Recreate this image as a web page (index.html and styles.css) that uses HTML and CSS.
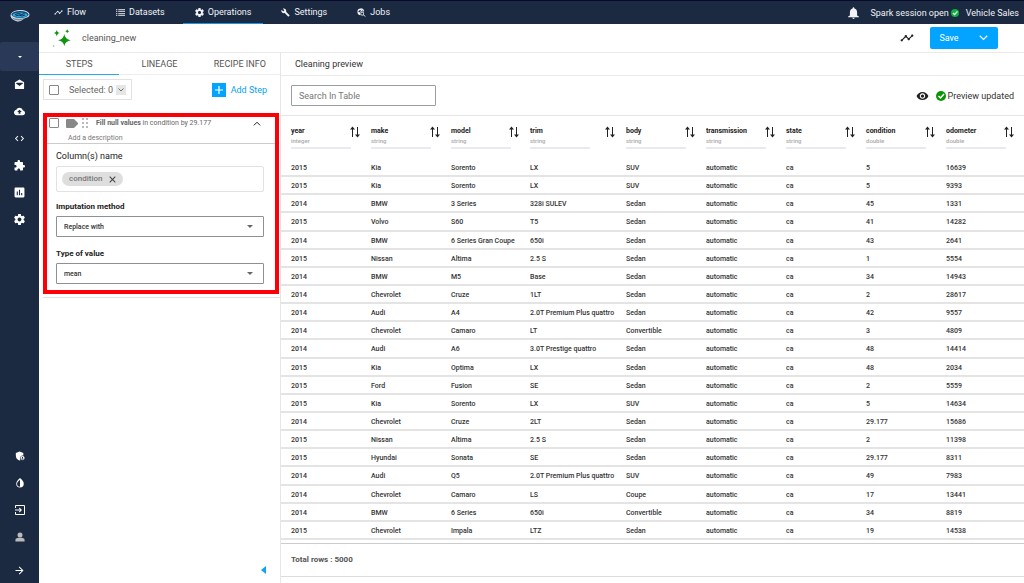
FILE: index.html
```html
<!DOCTYPE html>
<html lang="en">
<head>
<meta charset="utf-8">
<meta name="viewport" content="width=device-width, initial-scale=1">
<title>cleaning_new</title>
<link rel="stylesheet" href="styles.css">
</head>
<body>
<svg class="sprite" aria-hidden="true">
  <symbol id="timeline" viewBox="0 0 24 24"><path d="M23 8c0 1.1-.9 2-2 2-.18 0-.35-.02-.51-.07l-3.56 3.55c.05.16.07.34.07.52 0 1.1-.9 2-2 2s-2-.9-2-2c0-.18.02-.36.07-.52l-2.55-2.55c-.16.05-.34.07-.52.07s-.36-.02-.52-.07l-4.55 4.56c.05.16.07.33.07.51 0 1.1-.9 2-2 2s-2-.9-2-2 .9-2 2-2c.18 0 .35.02.51.07l4.56-4.55C8.02 9.36 8 9.18 8 9c0-1.1.9-2 2-2s2 .9 2 2c0 .18-.02.36-.07.52l2.55 2.55c.16-.05.34-.07.52-.07s.36.02.52.07l3.55-3.56C19.02 8.35 19 8.18 19 8c0-1.1.9-2 2-2s2 .9 2 2z"/></symbol>
  <symbol id="list" viewBox="2 2 20 20"><path d="M2 5h3v2H2zM2 9h3v2H2zM2 13h3v2H2zM2 17h3v2H2zM7 5h15v2H7zM7 9h15v2H7zM7 13h15v2H7zM7 17h15v2H7z"/></symbol>
  <symbol id="gear" viewBox="2 2 20 20"><path d="M19.43 12.98c.04-.32.07-.64.07-.98s-.03-.66-.07-.98l2.11-1.65c.19-.15.24-.42.12-.64l-2-3.46c-.12-.22-.39-.3-.61-.22l-2.49 1c-.52-.4-1.08-.73-1.69-.98l-.38-2.65C14.46 2.18 14.25 2 14 2h-4c-.25 0-.46.18-.49.42l-.38 2.65c-.61.25-1.17.59-1.69.98l-2.49-1c-.23-.09-.49 0-.61.22l-2 3.46c-.13.22-.07.49.12.64l2.11 1.65c-.04.32-.07.65-.07.98s.03.66.07.98l-2.11 1.65c-.19.15-.24.42-.12.64l2 3.46c.12.22.39.3.61.22l2.49-1c.52.4 1.08.73 1.69.98l.38 2.65c.03.24.24.42.49.42h4c.25 0 .46-.18.49-.42l.38-2.65c.61-.25 1.17-.59 1.69-.98l2.49 1c.23.09.49 0 .61-.22l2-3.46c.12-.22.07-.49-.12-.64l-2.11-1.65zM12 15.5c-1.93 0-3.5-1.57-3.5-3.5s1.57-3.5 3.5-3.5 3.5 1.57 3.5 3.5-1.57 3.5-3.5 3.5z"/></symbol>
  <symbol id="wrench" viewBox="0 0 24 24"><path d="M22.7 19l-9.1-9.1c.9-2.3.4-5-1.5-6.9-2-2-5-2.4-7.4-1.3L9 6 6 9 1.6 4.7C.4 7.1.9 10.1 2.9 12.1c1.9 1.9 4.6 2.4 6.9 1.5l9.1 9.1c.4.4 1 .4 1.4 0l2.3-2.3c.5-.4.5-1.1.1-1.4z"/></symbol>
  <symbol id="jobs" viewBox="0 0 24 24"><path fill-rule="evenodd" d="M10 1a9 9 0 0 1 9 8l-3 0a6 6 0 0 0-8 5 6 6 0 0 0 2 5A9 9 0 1 1 10 1zM3 9l3 3 5-5-3-2zM12 4l2 3 2-1z"/><path fill-rule="evenodd" d="M14 10a5 5 0 0 1 4 8l5 4-1 1-5-4a5 5 0 1 1-3-9zm0 2a3 3 0 1 0 0 6 3 3 0 0 0 0-6z"/></symbol>
  <symbol id="bell" viewBox="3 2 18 20"><path d="M12 22c1.1 0 2-.9 2-2h-4c0 1.1.9 2 2 2zm6-6v-5c0-3.07-1.63-5.64-4.5-6.32V4c0-.83-.67-1.5-1.5-1.5s-1.5.67-1.5 1.5v.68C7.64 5.36 6 7.92 6 11v5l-3 2v1h18v-1z"/></symbol>
  <symbol id="check" viewBox="2 2 20 20"><circle cx="12" cy="12" r="10"/><path class="tick" d="M7 12l4 4 7-8"/></symbol>
  <symbol id="chev" viewBox="0 0 12 8"><path class="line" d="M1 1l5 5 5-5"/></symbol>
  <symbol id="eye" viewBox="0 3 24 18"><path d="M12 4.500C7 4.500 2.730 7.610 1 12c1.730 4.390 6 7.500 11 7.500s9.270-3.110 11-7.500c-1.730-4.390-6-7.500-11-7.500zM12 17c-2.760 0-5-2.240-5-5s2.240-5 5-5 5 2.240 5 5-2.240 5-5 5zm0-8c-1.660 0-3 1.340-3 3s1.340 3 3 3 3-1.340 3-3-1.340-3-3-3z"/></symbol>
  <symbol id="mail" viewBox="0 0 24 24"><path d="M12 1l10 6v13a2 2 0 0 1-2 2H4a2 2 0 0 1-2-2V7zM4 9l8 6 8-6-2-1H6z" fill-rule="evenodd"/></symbol>
  <symbol id="cloud" viewBox="0 2 24 20"><path d="M19.350 10.040C18.670 6.590 15.640 4 12 4 9.110 4 6.600 5.640 5.350 8.040 2.340 8.360 0 10.910 0 14c0 3.310 2.690 6 6 6h13c2.760 0 5-2.240 5-5 0-2.640-2.050-4.780-4.650-4.960zM14 13v4h-4v-4H7l5-5 5 5h-3z"/></symbol>
  <symbol id="code" viewBox="0 0 24 24"><path d="M9.400 16.600L4.800 12l4.600-4.600L8 6l-6 6 6 6 1.400-1.400zm5.200 0l4.600-4.600-4.600-4.600L16 6l6 6-6 6-1.400-1.400z"/></symbol>
  <symbol id="puzzle" viewBox="1 1 22 22"><path d="M20.500 11H19V7c0-1.100-.9-2-2-2h-4V3.500C13 2.120 11.880 1 10.500 1S8 2.120 8 3.500V5H4c-1.100 0-1.990.9-1.990 2v3.800H3.500c1.490 0 2.700 1.210 2.700 2.700s-1.210 2.700-2.700 2.700H2V20c0 1.100.9 2 2 2h3.800v-1.500c0-1.490 1.210-2.700 2.700-2.700s2.700 1.210 2.700 2.700V22H17c1.100 0 2-.9 2-2v-4h1.500c1.380 0 2.500-1.120 2.500-2.500S21.880 11 20.500 11z"/></symbol>
  <symbol id="chart" viewBox="2 2 20 20"><path d="M19 3H5c-1.100 0-2 .9-2 2v14c0 1.100.9 2 2 2h14c1.100 0 2-.9 2-2V5c0-1.100-.9-2-2-2zM9 17H7v-7h2v7zm4 0h-2V7h2v10zm4 0h-2v-4h2v4z"/></symbol>
  <symbol id="shield" viewBox="0 0 24 24"><path fill-rule="evenodd" d="M11 1l9 4v6c-5-1-9 3-8 8l1 3-2 1C5 21 2 17 2 11V5zM18 12a5 5 0 1 1 0 10 5 5 0 0 1 0-10zm0 2a1 1 0 0 0 0 3 1 1 0 0 0 0-3zm-3 5c2 2 4 2 6 0-2-2-4-2-6 0z"/></symbol>
  <symbol id="drop" viewBox="0 0 24 24"><path fill-rule="evenodd" d="M12 0c6 5 9 9 9 14a9 9 0 0 1-18 0C3 9 6 5 12 0zm0 4c-5 4-7 7-7 10a7 7 0 0 0 7 7z"/></symbol>
  <symbol id="exit" viewBox="2 2 20 20"><path fill-rule="evenodd" d="M4 2h16a2 2 0 0 1 2 2v16a2 2 0 0 1-2 2H4a2 2 0 0 1-2-2v-4h2v4h16V4H4v4H2V4a2 2 0 0 1 2-2z"/><path d="M11 7l5 5-5 5-1-2 2-2H2v-2h10l-2-2z"/></symbol>
  <symbol id="user" viewBox="0 0 24 24"><circle cx="12" cy="7" r="6"/><path d="M1 23v-4c0-4 5-5 11-5s11 1 11 5v4z"/></symbol>
  <symbol id="arrow" viewBox="3 3 18 18"><path d="M12 4l-1.410 1.410L16.170 11H4v2h12.170l-5.580 5.590L12 20l8-8z"/></symbol>
  <symbol id="sort" viewBox="0 0 20 24"><path d="M5 1l5 6H6v15H4V7H0zM15 23l-5-6h4V2h2v15h4z"/></symbol>
</svg>
<div class="app">
  <aside class="rail">
    <a class="logo" href="#" aria-label="Home"><svg viewBox="0 0 40 26"><path d="M1 13C2 5 12 2 21 2s18 4 18 9-4 6-8 7-8 7-14 7S1 20 1 13z" fill="#cfdbe4"/><ellipse cx="20" cy="11" rx="17" ry="7" fill="#17466b"/><ellipse cx="20" cy="12" rx="15" ry="5" fill="#29a8e8"/><path d="M10 11l7-2 6 2 6-2M11 14l7-2 6 2 6-2" stroke="#0b2f4c" stroke-width="2" fill="none"/><path d="M4 17c6 3 20 4 28 0-4 2-8 6-14 6S6 21 4 17z" fill="#7c8b96"/></svg></a>
    <button class="rail-toggle" aria-label="Project menu"><span class="caret"></span></button>
    <nav class="rail-nav" aria-label="Project">
      <a href="#" aria-label="Inbox"><svg><use href="#mail"/></svg></a>
      <a href="#" aria-label="Upload"><svg><use href="#cloud"/></svg></a>
      <a href="#" aria-label="Code"><svg><use href="#code"/></svg></a>
      <a href="#" aria-label="Plugins"><svg><use href="#puzzle"/></svg></a>
      <a href="#" aria-label="Reports"><svg><use href="#chart"/></svg></a>
      <a href="#" aria-label="Settings"><svg><use href="#gear"/></svg></a>
    </nav>
    <nav class="rail-nav rail-end" aria-label="Account">
      <a href="#" aria-label="Administration"><svg><use href="#shield"/></svg></a>
      <a href="#" aria-label="Theme"><svg><use href="#drop"/></svg></a>
      <a href="#" aria-label="Sign out"><svg><use href="#exit"/></svg></a>
      <a class="muted" href="#" aria-label="Profile"><svg><use href="#user"/></svg></a>
      <a class="expand" href="#" aria-label="Expand"><svg><use href="#arrow"/></svg></a>
    </nav>
  </aside>
  <div class="page">
    <header class="topbar">
      <nav class="topnav" aria-label="Main">
        <a href="#"><svg><use href="#timeline"/></svg>Flow</a>
        <a href="#"><svg><use href="#list"/></svg>Datasets</a>
        <a href="#" class="active"><svg><use href="#gear"/></svg>Operations</a>
        <a href="#"><svg><use href="#wrench"/></svg>Settings</a>
        <a href="#"><svg><use href="#jobs"/></svg>Jobs</a>
      </nav>
      <div class="status">
        <button class="bell" aria-label="Notifications"><svg><use href="#bell"/></svg></button>
        <span>Spark session open</span><svg class="ok"><use href="#check"/></svg><span class="project">Vehicle Sales</span>
      </div>
    </header>
    <div class="titlebar">
      <svg class="sparkles" viewBox="0 0 54 58"><path d="M34 15q2 16 20 19-18 3-20 19-2-16-19-19 17-3 19-19zM11 2q1 9 10 10-9 1-10 11-1-10-10-11 9-1 10-10zM43 1q1 5 6 6-5 1-6 6-1-5-6-6 5-1 6-6zM2 49q0 3 3 3-3 0-3 3 0-3-3-3 3 0 3-3z"/></svg>
      <h1>cleaning_new</h1>
      <button class="trend" aria-label="Activity"><svg><use href="#timeline"/></svg></button>
      <div class="save"><button>Save</button><button aria-label="Save options"><svg><use href="#chev"/></svg></button></div>
    </div>
    <main class="work">
      <section class="steps">
        <nav class="tabs" aria-label="Recipe"><a class="active" href="#">STEPS</a><a href="#">LINEAGE</a><a href="#">RECIPE INFO</a></nav>
        <div class="tools">
          <div class="selected"><input type="checkbox" id="all"><label for="all">Selected: 0</label><button aria-label="Selection actions"><svg><use href="#chev"/></svg></button></div>
          <button class="add"><span class="plus"><svg viewBox="0 0 10 10"><path class="line" d="M5 0v10M0 5h10"/></svg></span>Add Step</button>
        </div>
        <article class="card">
          <div class="highlight">
            <header class="step">
              <div class="step-row">
                <input type="checkbox" aria-label="Select step">
                <svg class="tag" viewBox="0 0 12 9"><path d="M0 1a1 1 0 0 1 1-1h7l4 4v1L8 9H1a1 1 0 0 1-1-1z"/></svg>
                <svg class="grip" viewBox="0 0 6 10"><path d="M0 0h2v2H0zM4 0h2v2H4zM0 4h2v2H0zM4 4h2v2H4zM0 8h2v2H0zM4 8h2v2H4z"/></svg>
                <p><b>Fill null values</b> in condition by 29.177</p>
                <button class="fold" aria-label="Collapse"><svg><use href="#chev"/></svg></button>
              </div>
              <p class="desc">Add a description</p>
            </header>
            <div class="form">
              <h2>Column(s) name</h2>
              <div class="chips"><span class="chip">condition<button aria-label="Remove condition"><svg viewBox="0 0 10 10"><path class="line" d="M1 1l8 8M9 1L1 9"/></svg></button></span></div>
              <label for="method">Imputation method</label>
              <div class="select"><select id="method"><option>Replace with</option></select><span class="caret"></span></div>
              <label for="type">Type of value</label>
              <div class="select"><select id="type"><option>mean</option></select><span class="caret"></span></div>
            </div>
          </div>
        </article>
        <button class="collapse" aria-label="Collapse panel"><svg viewBox="0 0 5 8"><path d="M5 0v8L0 4z"/></svg></button>
      </section>
      <section class="preview">
        <h2 class="preview-title">Cleaning preview</h2>
        <div class="filter">
          <input type="text" placeholder="Search In Table" aria-label="Search In Table">
          <button class="view" aria-label="Show columns"><svg><use href="#eye"/></svg></button>
          <svg class="ok"><use href="#check"/></svg><span>Preview updated</span>
        </div>
        <div class="table-wrap">
        <table>
          <colgroup><col class="c"><col class="c"><col class="c-model"><col class="c-trim"><col class="c"><col class="c"><col class="c"><col class="c"><col></colgroup>
          <thead><tr>
            <th><div class="head"><span>year<small>integer</small></span><button aria-label="Sort year"><svg><use href="#sort"/></svg></button></div></th>
            <th><div class="head"><span>make<small>string</small></span><button aria-label="Sort make"><svg><use href="#sort"/></svg></button></div></th>
            <th><div class="head"><span>model<small>string</small></span><button aria-label="Sort model"><svg><use href="#sort"/></svg></button></div></th>
            <th><div class="head"><span>trim<small>string</small></span><button aria-label="Sort trim"><svg><use href="#sort"/></svg></button></div></th>
            <th><div class="head"><span>body<small>string</small></span><button aria-label="Sort body"><svg><use href="#sort"/></svg></button></div></th>
            <th><div class="head"><span>transmission<small>string</small></span><button aria-label="Sort transmission"><svg><use href="#sort"/></svg></button></div></th>
            <th><div class="head"><span>state<small>string</small></span><button aria-label="Sort state"><svg><use href="#sort"/></svg></button></div></th>
            <th><div class="head"><span>condition<small>double</small></span><button aria-label="Sort condition"><svg><use href="#sort"/></svg></button></div></th>
            <th><div class="head"><span>odometer<small>double</small></span><button aria-label="Sort odometer"><svg><use href="#sort"/></svg></button></div></th>
          </tr></thead>
          <tbody>
            <tr><td>2015<td>Kia<td>Sorento<td>LX<td>SUV<td>automatic<td>ca<td>5<td>16639</tr>
            <tr><td>2015<td>Kia<td>Sorento<td>LX<td>SUV<td>automatic<td>ca<td>5<td>9393</tr>
            <tr><td>2014<td>BMW<td>3 Series<td>328i SULEV<td>Sedan<td>automatic<td>ca<td>45<td>1331</tr>
            <tr><td>2015<td>Volvo<td>S60<td>T5<td>Sedan<td>automatic<td>ca<td>41<td>14282</tr>
            <tr><td>2014<td>BMW<td>6 Series Gran Coupe<td>650i<td>Sedan<td>automatic<td>ca<td>43<td>2641</tr>
            <tr><td>2015<td>Nissan<td>Altima<td>2.5 S<td>Sedan<td>automatic<td>ca<td>1<td>5554</tr>
            <tr><td>2014<td>BMW<td>M5<td>Base<td>Sedan<td>automatic<td>ca<td>34<td>14943</tr>
            <tr><td>2014<td>Chevrolet<td>Cruze<td>1LT<td>Sedan<td>automatic<td>ca<td>2<td>28617</tr>
            <tr><td>2014<td>Audi<td>A4<td>2.0T Premium Plus quattro<td>Sedan<td>automatic<td>ca<td>42<td>9557</tr>
            <tr><td>2014<td>Chevrolet<td>Camaro<td>LT<td>Convertible<td>automatic<td>ca<td>3<td>4809</tr>
            <tr><td>2014<td>Audi<td>A6<td>3.0T Prestige quattro<td>Sedan<td>automatic<td>ca<td>48<td>14414</tr>
            <tr><td>2015<td>Kia<td>Optima<td>LX<td>Sedan<td>automatic<td>ca<td>48<td>2034</tr>
            <tr><td>2015<td>Ford<td>Fusion<td>SE<td>Sedan<td>automatic<td>ca<td>2<td>5559</tr>
            <tr><td>2015<td>Kia<td>Sorento<td>LX<td>SUV<td>automatic<td>ca<td>5<td>14634</tr>
            <tr><td>2014<td>Chevrolet<td>Cruze<td>2LT<td>Sedan<td>automatic<td>ca<td>29.177<td>15686</tr>
            <tr><td>2015<td>Nissan<td>Altima<td>2.5 S<td>Sedan<td>automatic<td>ca<td>2<td>11398</tr>
            <tr><td>2015<td>Hyundai<td>Sonata<td>SE<td>Sedan<td>automatic<td>ca<td>29.177<td>8311</tr>
            <tr><td>2014<td>Audi<td>Q5<td>2.0T Premium Plus quattro<td>SUV<td>automatic<td>ca<td>49<td>7983</tr>
            <tr><td>2014<td>Chevrolet<td>Camaro<td>LS<td>Coupe<td>automatic<td>ca<td>17<td>13441</tr>
            <tr><td>2014<td>BMW<td>6 Series<td>650i<td>Convertible<td>automatic<td>ca<td>34<td>8819</tr>
            <tr><td>2015<td>Chevrolet<td>Impala<td>LTZ<td>Sedan<td>automatic<td>ca<td>19<td>14538</tr>
          </tbody>
        </table>
        </div>
        <footer class="total">Total rows : 5000</footer>
      </section>
    </main>
  </div>
</div>
</body>
</html>
```
FILE: styles.css
```css
* { box-sizing: border-box; }
body { margin: 0; font: 9px/12px Roboto, sans-serif; color: #333; background: #fff; }
h1, h2, p { margin: 0; font-weight: 400; }
a { color: inherit; text-decoration: none; }
button { display: flex; align-items: center; justify-content: center; margin: 0; padding: 0; border: 0; background: none; color: inherit; font: inherit; cursor: pointer; }
svg { display: block; flex: none; fill: currentColor; }
.sprite { position: absolute; width: 0; height: 0; }
.line { fill: none; stroke: currentColor; stroke-width: 1.5; }
.tick { fill: none; stroke: #fff; stroke-width: 3; }
.ok { width: 10px; height: 10px; color: #0a930a; }
input[type="checkbox"] { appearance: none; flex: none; width: 10px; height: 10px; margin: 0; border: 1px solid #888; border-radius: 1px; background: #fff; }
.caret { width: 0; border: 3px solid transparent; border-top-color: currentColor; border-bottom: 0; }

.app { display: flex; min-height: 100vh; border-top: 1px solid #080a2c; }
.rail { display: flex; flex-direction: column; flex: none; width: 39px; background: #1b2941; color: #fff; }
.logo { display: flex; justify-content: center; padding: 8px 0 0; height: 41px; }
.logo svg { width: 20px; height: 13px; }
.rail-toggle { height: 29px; background: #2a3958; border-radius: 2px; }
.rail-toggle .caret { border-width: 2px; border-bottom: 0; }
.rail-nav { display: flex; flex-direction: column; align-items: center; }
.rail-nav a { display: flex; align-items: center; justify-content: center; width: 100%; height: 27px; }
.rail-nav svg { width: 11px; height: 11px; }
.rail-end { margin-top: auto; }
.rail-end svg { width: 10px; height: 10px; }
.rail-nav .muted { color: #bbb; }
.rail-nav .expand { height: 33px; padding-top: 8px; }
.rail-nav .expand svg { width: 9px; height: 9px; }

.page { display: flex; flex-direction: column; flex: 1; min-width: 0; }
.topbar { display: flex; justify-content: space-between; height: 23px; padding: 0 5px 0 3px; background: #1b2941; color: #f1f3f6; }
.topnav { display: flex; gap: 6px; }
.topnav a { display: flex; align-items: center; gap: 4px; padding: 0 12px; border-bottom: 1px solid transparent; }
.topnav .active { border-color: #1597e5; }
.topnav svg { width: 9px; height: 9px; }
.status { display: flex; align-items: center; }
.bell { margin-right: 11px; }
.bell svg { width: 11px; height: 12px; }
.status .ok { width: 8px; height: 8px; margin: 0 7px 0 2px; color: #0caf3d; }

.titlebar { display: flex; align-items: center; height: 29px; padding: 0 26px 0 14px; border-bottom: 1px solid #eaeaea; }
.sparkles { width: 18px; height: 19px; color: #109410; overflow: visible; }
h1 { margin: 0 auto 0 11px; font-size: 9px; color: #555; }
.trend { margin-right: 16px; color: #222; }
.trend svg { width: 14px; height: 14px; }
.save { display: flex; height: 22px; background: #03a4ff; border-radius: 2px; color: #fff; }
.save button { width: 38px; }
.save button + button { width: 30px; }
.save svg { width: 9px; height: 6px; }

.work { display: flex; flex: 1; }
.steps { display: flex; flex-direction: column; flex: none; width: 242px; border-right: 1px solid #e6e6e6; }
.tabs { display: flex; height: 22px; border-bottom: 1px solid #eee; color: #555; }
.tabs a { display: flex; align-items: center; justify-content: center; flex: 1; margin-bottom: -1px; border-bottom: 1px solid transparent; }
.tabs .active { border-color: #24a9ef; }
.tools { display: flex; align-items: center; justify-content: space-between; padding: 4px 13px 5px 4px; }
.selected { display: flex; align-items: center; height: 21px; padding: 0 5px; border: 1px solid #e2e2e2; color: #666; }
.selected label { margin: 0 3px 0 10px; }
.selected button { width: 10px; height: 10px; background: #e6e6e6; color: #444; }
.selected svg { width: 6px; height: 4px; }
.add { gap: 5px; color: #089fee; }
.plus { display: flex; align-items: center; justify-content: center; width: 14px; height: 14px; background: #03a4ff; color: #fff; }
.plus svg { width: 8px; height: 8px; }

.card { margin: 8px 0 0 4px; padding-bottom: 3px; border-bottom: 1px solid #e2e2e2; }
.highlight { margin-right: 1px; border: 4px solid #fb0007; }
.step { padding: 0 2px; border-bottom: 1px solid #ccc; font-size: 7px; color: #666; }
.step-row { display: flex; align-items: center; height: 12px; }
.step-row p { flex: 1; margin-left: 8px; }
.tag { width: 12px; height: 9px; margin: 0 4px 0 7px; color: #888; }
.grip { width: 6px; height: 10px; color: #bbb; }
.fold { width: 32px; color: #111; transform: rotate(180deg); }
.fold svg { width: 8px; height: 5px; }
.desc { padding: 0 0 0 19px; height: 14px; line-height: 18px; color: #777; }
.form { display: flex; flex-direction: column; padding: 6px 11px 6px 9px; }
.form h2 { margin-bottom: 4px; font-size: 9px; color: #222; }
.form label { margin-bottom: 3px; font-size: 8px; font-weight: 700; color: #222; }
.chips { height: 26px; padding: 5px; margin-bottom: 9px; border: 1px solid #e2e2e2; border-radius: 2px; }
.chip { display: inline-flex; align-items: center; gap: 7px; height: 14px; padding: 0 7px; border-radius: 7px; background: #dedede; color: #777; font-size: 8px; font-weight: 500; vertical-align: top; }
.chip svg { width: 7px; height: 7px; color: #444; }
.select { display: grid; align-items: center; margin-bottom: 11px; }
.select > * { grid-area: 1 / 1; }
.select .caret { justify-self: end; margin-right: 11px; color: #666; pointer-events: none; }
.select:last-child { margin-bottom: 0; }
select { appearance: none; width: 100%; height: 21px; padding: 0 7px; border: 1px solid #8c9197; border-radius: 1px; background: #fff; color: #333; font: 500 7px/12px Roboto, sans-serif; }
.collapse { margin: auto 14px 9px auto; color: #0aa3f5; }
.collapse svg { width: 5px; height: 8px; }

.preview { display: flex; flex-direction: column; flex: 1; min-width: 0; }
.preview-title { height: 23px; padding-left: 14px; border-bottom: 1px solid #eaeaea; font-size: 9px; line-height: 23px; }
.filter { display: flex; align-items: center; padding: 9px 10px; border-bottom: 1px solid #e6e6e6; }
.filter input { width: 145px; height: 21px; margin-right: auto; padding: 0 7px; border: 1px solid #999ea4; border-radius: 1px; font: 9px/12px Roboto, sans-serif; }
.filter input::placeholder { color: #777; }
.view { margin-right: 7px; color: #222; }
.view svg { width: 13px; height: 10px; }
.filter .ok { margin-right: 2px; }

.table-wrap { display: grid; flex: 1; }
table { width: 100%; height: 100%; table-layout: fixed; border-collapse: separate; border-spacing: 0; color: #333; }
.c { width: 80px; }
.c-model { width: 79px; }
.c-trim { width: 96px; }
th { height: 43px; padding: 10px 1px 0 10px; text-align: left; vertical-align: top; font-size: 7px; line-height: 11px; font-weight: 700; color: #222; }
th:last-child { padding-right: 10px; }
.head { display: flex; align-items: flex-start; justify-content: space-between; }
.head span { flex: none; width: 60px; border-bottom: 2px solid #e8eaf0; padding-bottom: 2px; }
.head button { margin-left: -4px; }
.head small { display: block; font-size: 6px; line-height: 8px; font-weight: 500; color: #aaa; }
.head svg { width: 10px; height: 12px; }
td { height: 18px; padding: 2px 0 0 10px; border-bottom: 2px solid #e4e4e4; font-size: 7px; line-height: 12px; font-weight: 500; white-space: nowrap; }
.total { margin: 3px 0 6px; padding: 10px; height: 34px; border-top: 1px solid #ccc; border-bottom: 1px solid #ddd; color: #555; font-size: 8px; font-weight: 700; }
```
